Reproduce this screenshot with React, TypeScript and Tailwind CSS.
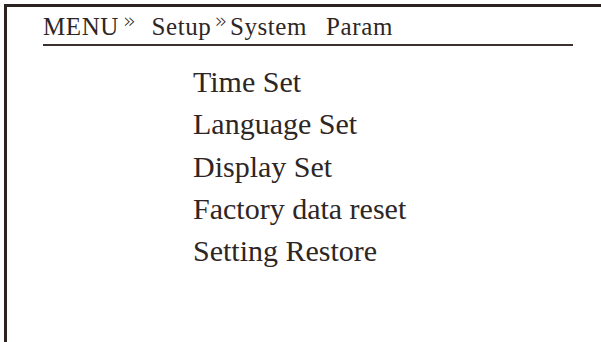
const items = ["Time Set", "Language Set", "Display Set", "Factory data reset", "Setting Restore"];

const Chevron = ({ className }: { className: string }) => (
  <span className={`-mt-[1px] align-top font-['DejaVu_Sans',sans-serif] text-[21px] font-extralight leading-[20px] ${className}`}>»</span>
);

export default function App() {
  return (
    <div className="flex h-[342px] w-[601px] bg-white pl-1 pt-1 font-['Liberation_Serif',serif] text-[#2e2624]">
      <div className="flex-1 border-l-[3px] border-t-[3px] border-[#2b2320]">
        <div className="ml-[36px] mr-[28px] mt-[5px] border-b-2 border-[#3b3230] pb-[2px]">
          <div className="flex items-start text-[25px] leading-[30px] tracking-[0.6px]">
            <span>MENU</span>
            <Chevron className="ml-[4px]" />
            <span className="ml-[15px]">Setup</span>
            <Chevron className="ml-[3px]" />
            <span className="ml-[2px]">System</span>
            <span className="ml-[19px]">Param</span>
          </div>
        </div>
        <ul className="ml-[186px] mt-[15px] flex flex-col text-[30px] leading-[42.25px]">
          {items.map((item) => (
            <li key={item}>{item}</li>
          ))}
        </ul>
      </div>
    </div>
  );
}
